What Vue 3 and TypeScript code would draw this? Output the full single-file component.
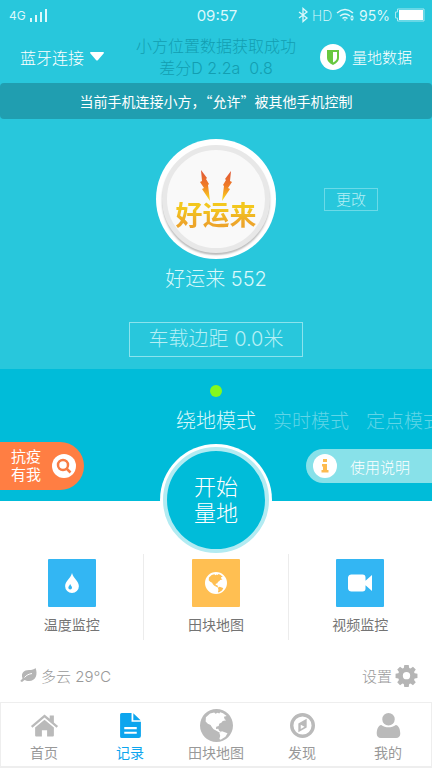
<script setup lang="ts">
import { ref } from 'vue'

interface Entry {
  label: string
  icon: string
}

const modes: string[] = ['绕地模式', '实时模式', '定点模式']
const activeMode = ref(0)

const services: Entry[] = [
  { label: '温度监控', icon: 'drop' },
  { label: '田块地图', icon: 'globe' },
  { label: '视频监控', icon: 'video' },
]

const tabs: Entry[] = [
  { label: '首页', icon: 'home' },
  { label: '记录', icon: 'file' },
  { label: '田块地图', icon: 'globe' },
  { label: '发现', icon: 'compass' },
  { label: '我的', icon: 'user' },
]
const activeTab = ref(1)

const shapes: Record<string, string> = {
  drop: 'M12 1C10.500 7 4.500 10 4.500 15.500a7.500 7.500 0 0 0 15 0C19.500 10 13.500 7 12 1ZM10 13c.6 1.800 2 2.500 2 4.200a2 2 0 0 1-4 0c0-1.700 1.400-2.400 2-4.200Z',
  globe:
    'M12 0a12 12 0 1 0 0 24a12 12 0 0 0 0-24ZM4.300 6l3-2.700 3-.8 1 1 1.500-.8 1.200.6.700-1 2 .8 2.700 2-2 .6.5 1.700 1.200.8-2.600.5-.8 1.200-1.700.9-.4 1.500-1.800.6-.2 1.600 1.700-.2.600 1.500 1.200.8-.7.7-2.500-1.500-2-1-1.200-1.500-1-1.600-2-1-1.600-1.700ZM14 17l2-.9 3 1.200 1 .4-1.500 2.400-3.500 2.300-.9-.5.600-2.400Z',
  video: 'M3.500 3.500h11a3 3 0 0 1 3 3v3.300L24 4v16l-6.500-5.800v3.300a3 3 0 0 1-3 3h-11a3.500 3.500 0 0 1-3.500-3v-11a3.500 3.500 0 0 1 3.500-3Z',
  home: 'M12 1.500 17 5.500V2.500h4v6.500l4 3.500-1.400 1.700L12 4.400.4 14.200-1 12.500ZM12 6.500l9 7.400V21.500q0 1-1 1h-5.500v-6h-5v6H4q-1 0-1-1v-7.600Z',
  file: 'M3.500 0H13v8.500h9V22a2 2 0 0 1-2 2H3.500a1.500 1.500 0 0 1-1.500-1.500v-21A1.500 1.500 0 0 1 3.500 0ZM14.700.3 21.700 7h-7ZM6 13.500v2h12v-2ZM6 18v2h12v-2Z',
  compass:
    'M12 0a12 12 0 1 0 0 24a12 12 0 0 0 0-24ZM12 3.300a8.700 8.700 0 1 1 0 17.400a8.700 8.700 0 0 1 0-17.400ZM16 5.500v8.500l-8 4.500V10ZM10.300 11.300v4l3.700-2Z',
  user: 'M12 0a6 6 0 1 1 0 12a6 6 0 0 1 0-12ZM5 11.500c4 3 10 3 14 0 3 .5 4.300 4.500 4.300 8.500 0 2.500-1.500 4-4 4H4.700c-2.500 0-4-1.500-4-4 0-4 1.300-8 4.300-8.500Z',
}
</script>

<template>
  <main class="app">
    <section class="hero">
      <div class="status">
        <div class="status-side">
          <span class="network">4G</span>
          <svg class="signal" viewBox="0 0 18 13" aria-hidden="true">
            <path d="M0 9h2v4H0ZM5 6h2v7H5ZM10 3h2v10h-2ZM15 0h2v13h-2Z" />
          </svg>
        </div>
        <time class="clock">09:57</time>
        <div class="status-side end">
          <svg class="bluetooth" viewBox="0 0 10 14" aria-hidden="true">
            <path d="m1 4 8 6-4 3.500v-13L9 4l-8 6" />
          </svg>
          <span class="hd">HD</span>
          <svg class="wifi" viewBox="0 0 19 14" aria-hidden="true">
            <path class="arc" d="M1 5Q9 -2 17 5M4 8q5-4 10 0M6.500 10.500q2.500-2 5 0" />
            <path d="M9 13 7.500 11.500h3ZM16 7l2 2.500h-4ZM16 13l2-2.500h-4Z" />
          </svg>
          <span>95%</span>
          <svg class="battery" viewBox="0 0 31 14" aria-hidden="true">
            <path class="shell" d="M3.500 1h26.500v12H3.500V10H1.500V4h2Z" />
            <path class="charge" d="M5 2h24v10H5Z" />
          </svg>
        </div>
      </div>

      <header class="topbar">
        <button class="link" type="button">
          蓝牙连接
          <svg class="caret" viewBox="0 0 14 9" aria-hidden="true"><path d="M0 1Q0 0 1 0h12q1 0 1 1L8 8Q7 9 6 8Z" /></svg>
        </button>
        <p class="position">小方位置数据获取成功<br />差分D 2.2a&nbsp; 0.8</p>
        <button class="link end" type="button">
          <svg class="shield" viewBox="0 0 26 26" aria-hidden="true">
            <circle cx="13" cy="13" r="13" />
            <path class="green" fill-rule="evenodd" d="M7 6h12v8q0 4-6 7-6-3-6-7ZM13 8v10.500q4-2 4-5V8Z" />
          </svg>
          量地数据
        </button>
      </header>

      <p class="notice">当前手机连接小方，“允许”被其他手机控制</p>

      <div class="profile">
        <div class="avatar">
          <div class="plate">
            <svg class="bolts" viewBox="0 0 32 32" aria-hidden="true">
              <defs>
                <linearGradient id="flame" x1="0" y1="0" x2="0" y2="1">
                  <stop offset="0" stop-color="#df5636" />
                  <stop offset=".5" stop-color="#f07c26" />
                  <stop offset="1" stop-color="#fbe11b" />
                </linearGradient>
              </defs>
              <path fill="url(#flame)" d="m1 0 6 8-1 1 3 5-1 1 2 16-8-12 2-1-4-6 2-1Z" />
              <path fill="url(#flame)" d="m31 1-6 8 1 1-3 5 1 1-2 15 8-12-2-1 4-6-2-1Z" />
            </svg>
            <span class="brand">好运来</span>
          </div>
        </div>
        <button class="change" type="button">更改</button>
      </div>
      <h1 class="name">好运来 552</h1>
      <button class="margin" type="button">车载边距 0.0米</button>
    </section>

    <section class="mode-panel">
      <span class="dot"></span>
      <nav class="modes">
        <button
          v-for="(mode, i) in modes"
          :key="mode"
          type="button"
          :class="['mode', { active: i === activeMode }]"
          @click="activeMode = i"
        >
          {{ mode }}
        </button>
      </nav>
      <div class="actions">
        <a class="pill covid" href="#">
          <span>抗疫<br />有我</span>
          <svg class="badge" viewBox="0 0 24 24" aria-hidden="true">
            <circle cx="12" cy="12" r="12" />
            <circle class="lens" cx="11" cy="11" r="5" />
            <path class="lens" d="m14.500 14.500 4 4" />
          </svg>
        </a>
        <button class="start" type="button"><span>开始<br />量地</span></button>
        <a class="pill guide" href="#">
          <svg class="badge" viewBox="0 0 24 24" aria-hidden="true">
            <circle cx="12" cy="12" r="12" />
            <path class="info" d="M10 5h4v3h-4ZM9 10h5v6h1.500v2.500h-7V16H10v-3.500H9Z" />
          </svg>
          <span>使用说明</span>
        </a>
      </div>
    </section>

    <section class="services">
      <a v-for="item in services" :key="item.label" class="service" href="#">
        <span :class="['tile', item.icon]">
          <svg viewBox="0 0 24 24" aria-hidden="true"><path fill-rule="evenodd" :d="shapes[item.icon]" /></svg>
        </span>
        <span>{{ item.label }}</span>
      </a>
    </section>

    <section class="footer-row">
      <span class="weather">
        <svg class="leaf" viewBox="0 0 17 14" aria-hidden="true">
          <path d="M15.500 0c2.500 6 .5 13-6.500 13-2 0-3.500-.6-4.500-1l-2.500 2L.2 13 2.500 10.500C.5 5 4 2 9 2c3 0 5-.6 6.500-2Z" />
          <path class="vein" d="M4.500 9.500C6.500 7 9 6 12 5.500" />
        </svg>
        多云 29℃
      </span>
      <button class="settings" type="button">
        设置
        <svg class="gear" viewBox="0 0 24 24" aria-hidden="true">
          <path
            fill-rule="evenodd"
            d="M9.500 0h5l.6 3.300 1.500.7 2.800-2 3.200 3.200-2 2.800.7 1.500 3.200.6v4.800l-3.200.6-.7 1.500 2 2.800-3.200 3.200-2.800-2-1.500.7-.6 3.300h-5l-.6-3.300-1.500-.7-2.800 2L1.400 19.800l2-2.800-.7-1.500-3.200-.6v-4.800l3.200-.6.7-1.500-2-2.800L4.600 2l2.800 2 1.500-.7ZM12 8a4.200 4.200 0 1 0 0 8.400a4.200 4.200 0 0 0 0-8.400Z"
          />
        </svg>
      </button>
    </section>

    <nav class="tabbar">
      <button
        v-for="(tab, i) in tabs"
        :key="tab.label"
        type="button"
        :class="['tab', { active: i === activeTab }]"
        @click="activeTab = i"
      >
        <span class="tab-icon">
          <svg :class="tab.icon" viewBox="0 0 24 24" aria-hidden="true"><path fill-rule="evenodd" :d="shapes[tab.icon]" /></svg>
        </span>
        <span>{{ tab.label }}</span>
      </button>
    </nav>
  </main>
</template>

<style>
body {
  margin: 0;
  background: #fff;
}
</style>

<style scoped>
.app {
  display: flex;
  flex-direction: column;
  min-height: 100vh;
  overflow: hidden;
  font-family: Inter, 'Noto Sans CJK SC', sans-serif;
  font-weight: 300;
  color: #fff;
}
button {
  padding: 0;
  border: 0;
  background: none;
  color: inherit;
  font: inherit;
  white-space: nowrap;
}
a {
  color: inherit;
  text-decoration: none;
}
p,
h1 {
  margin: 0;
  font-weight: inherit;
}
svg {
  display: block;
  flex: none;
  overflow: visible;
  fill: currentColor;
}
.hero {
  display: flex;
  flex-direction: column;
  align-items: stretch;
  padding-bottom: 12px;
  background: #28c7dc;
}
.status {
  display: grid;
  grid-template-columns: 1fr auto 1fr;
  align-items: center;
  height: 30px;
  padding: 0 7px 0 9px;
  font-size: 14px;
  font-weight: 400;
  color: #dcf8fb;
}
.status-side {
  display: flex;
  align-items: center;
  gap: 4px;
}
.status-side.end {
  justify-content: flex-end;
}
.network {
  font-size: 12px;
}
.clock {
  font-size: 15px;
}
.signal {
  width: 18px;
  height: 13px;
}
.bluetooth {
  width: 10px;
  height: 14px;
  fill: none;
  stroke: currentColor;
  stroke-width: 1.300;
}
.hd {
  font-family: 'Open Sans', sans-serif;
  font-weight: 300;
}
.wifi {
  width: 19px;
  height: 14px;
}
.arc {
  fill: none;
  stroke: currentColor;
  stroke-width: 1.500;
}
.battery {
  width: 31px;
  height: 14px;
}
.shell {
  fill: none;
  stroke: #a5e8f0;
}
.charge {
  fill: #fff;
}
.topbar {
  display: grid;
  grid-template-columns: 1fr auto 1fr;
  align-items: center;
  height: 53px;
  padding: 0 20px;
}
.link {
  display: flex;
  align-items: center;
  gap: 6px;
  font-size: 16px;
}
.link.end {
  justify-content: flex-end;
  font-size: 15px;
}
.caret {
  width: 14px;
  height: 9px;
}
.position {
  font-size: 16px;
  line-height: 22px;
  text-align: center;
  color: #139eb1;
}
.shield {
  width: 26px;
  height: 26px;
}
.green {
  fill: #68c83f;
}
.notice {
  border-radius: 4px;
  background: #209eb0;
  font-family: 'Noto Sans CJK SC', sans-serif;
  font-size: 14px;
  line-height: 36px;
  text-align: center;
  font-weight: 400;
}
.profile {
  display: grid;
  grid-template-columns: 1fr auto 1fr;
  align-items: center;
  margin-top: 20px;
}
.avatar {
  display: grid;
  grid-column: 2;
  place-items: center;
  box-sizing: border-box;
  width: 120px;
  height: 120px;
  border-radius: 50%;
  background: #fff;
}
.plate {
  display: flex;
  flex-direction: column;
  align-items: center;
  box-sizing: border-box;
  width: 108px;
  height: 108px;
  padding-top: 20px;
  border: 5px solid #e8e8e8;
  border-radius: 50%;
  background: #f9f9f9;
  box-shadow: 0 2px 2px #bbb;
}
.bolts {
  width: 32px;
  height: 32px;
}
.brand {
  background: linear-gradient(#f3c71e 25%, #eda52a 75%);
  background-clip: text;
  color: transparent;
  font-size: 27px;
  font-weight: 700;
  line-height: 28px;
  white-space: nowrap;
}
.change {
  justify-self: center;
  width: 54px;
  margin-right: 6px;
  border: 1px solid #6bdae8;
  font-size: 15px;
  line-height: 21px;
  color: #b5eff5;
}
.name {
  margin-top: 6px;
  font-size: 20px;
  line-height: 28px;
  text-align: center;
  color: #d7f8fb;
}
.margin {
  align-self: center;
  margin-top: 29px;
  padding: 0 19px;
  border: 1px solid #8be3ed;
  font-size: 20px;
  line-height: 33px;
  color: #b5eff5;
}
.mode-panel {
  display: flex;
  flex-direction: column;
  align-items: center;
  background: #00bcd9;
}
.dot {
  width: 12px;
  height: 12px;
  margin-top: 16px;
  border-radius: 50%;
  background: #84f91d;
}
.modes {
  display: flex;
  align-items: center;
  align-self: stretch;
  gap: 17px;
  height: 28px;
  margin: 8px 0 2px;
  padding-left: calc(50% - 40px);
  overflow: hidden;
}
.mode {
  flex: none;
  font-size: 19px;
  color: #60d5e7;
}
.mode.active {
  font-size: 20px;
  color: #d7f8fb;
}
.actions {
  display: grid;
  grid-template-columns: 1fr auto 1fr;
  align-items: start;
  align-self: stretch;
  height: 66px;
}
.pill {
  display: flex;
  align-items: center;
  box-sizing: border-box;
}
.badge {
  width: 24px;
  height: 24px;
}
.covid {
  justify-self: start;
  gap: 11px;
  height: 48px;
  margin-top: 7px;
  padding: 0 8px 0 11px;
  border-radius: 0 24px 24px 0;
  background: #ff7e43;
  font-size: 15px;
  line-height: 18px;
  font-weight: 400;
}
.lens {
  fill: none;
  stroke: #f87c44;
  stroke-width: 2.500;
}
.guide {
  justify-self: end;
  gap: 13px;
  height: 34px;
  margin-top: 14px;
  padding: 0 22px 0 7px;
  border-radius: 17px 0 0 17px;
  background: #88e1e9;
  font-size: 15px;
}
.info {
  fill: #fdbb50;
}
.start {
  position: relative;
  box-sizing: border-box;
  width: 112px;
  height: 112px;
  margin-top: 9px;
  padding: 3px;
  border-radius: 50%;
  background: #fff;
  font-size: 22px;
  line-height: 26px;
}
.start span {
  display: grid;
  place-content: center;
  box-sizing: border-box;
  width: 106px;
  height: 106px;
  border: 4px solid #b2ebf2;
  border-radius: 50%;
  background: #00bcd9;
}
.services {
  display: flex;
  padding-top: 53px;
}
.service {
  display: flex;
  flex: 1;
  flex-direction: column;
  align-items: center;
  gap: 7px;
  box-sizing: border-box;
  height: 86px;
  padding-top: 5px;
  font-size: 14px;
  line-height: 22px;
  font-weight: 400;
  color: #747474;
}
.service + .service {
  border-left: 1px solid #ececec;
}
.tile {
  display: grid;
  place-items: center;
  width: 48px;
  height: 48px;
  border-radius: 1px;
  background: #33b6f3;
  color: #fff;
}
.tile svg {
  width: 24px;
  height: 24px;
}
.tile.drop svg,
.tile.globe svg {
  width: 22px;
  height: 22px;
}
.tile.globe {
  background: #ffbf52;
}
.footer-row {
  display: flex;
  align-items: center;
  justify-content: space-between;
  flex: 1;
  padding: 8px 15px 0 20px;
  font-size: 15px;
  color: #999;
}
.weather,
.settings {
  display: flex;
  align-items: center;
  gap: 4px;
}
.leaf {
  width: 17px;
  height: 14px;
}
.vein {
  fill: none;
  stroke: #fff;
}
.gear {
  width: 21px;
  height: 21px;
}
.leaf,
.gear {
  color: #b5b5b5;
}
.tabbar {
  display: flex;
  box-sizing: border-box;
  height: 66px;
  border: 1px solid #eee;
  border-bottom-width: 2px;
}
.tab {
  display: flex;
  flex: 1;
  flex-direction: column;
  align-items: center;
  padding-top: 5px;
  font-size: 14px;
  line-height: 22px;
  font-weight: 400;
  color: #999;
}
.tab-icon {
  display: grid;
  place-items: center;
  height: 34px;
  color: #bababa;
}
.tab-icon svg {
  width: 25px;
  height: 25px;
}
.tab-icon .globe {
  width: 33px;
  height: 33px;
}
.tab.active,
.tab.active .tab-icon {
  color: #0ca5ee;
}
</style>
